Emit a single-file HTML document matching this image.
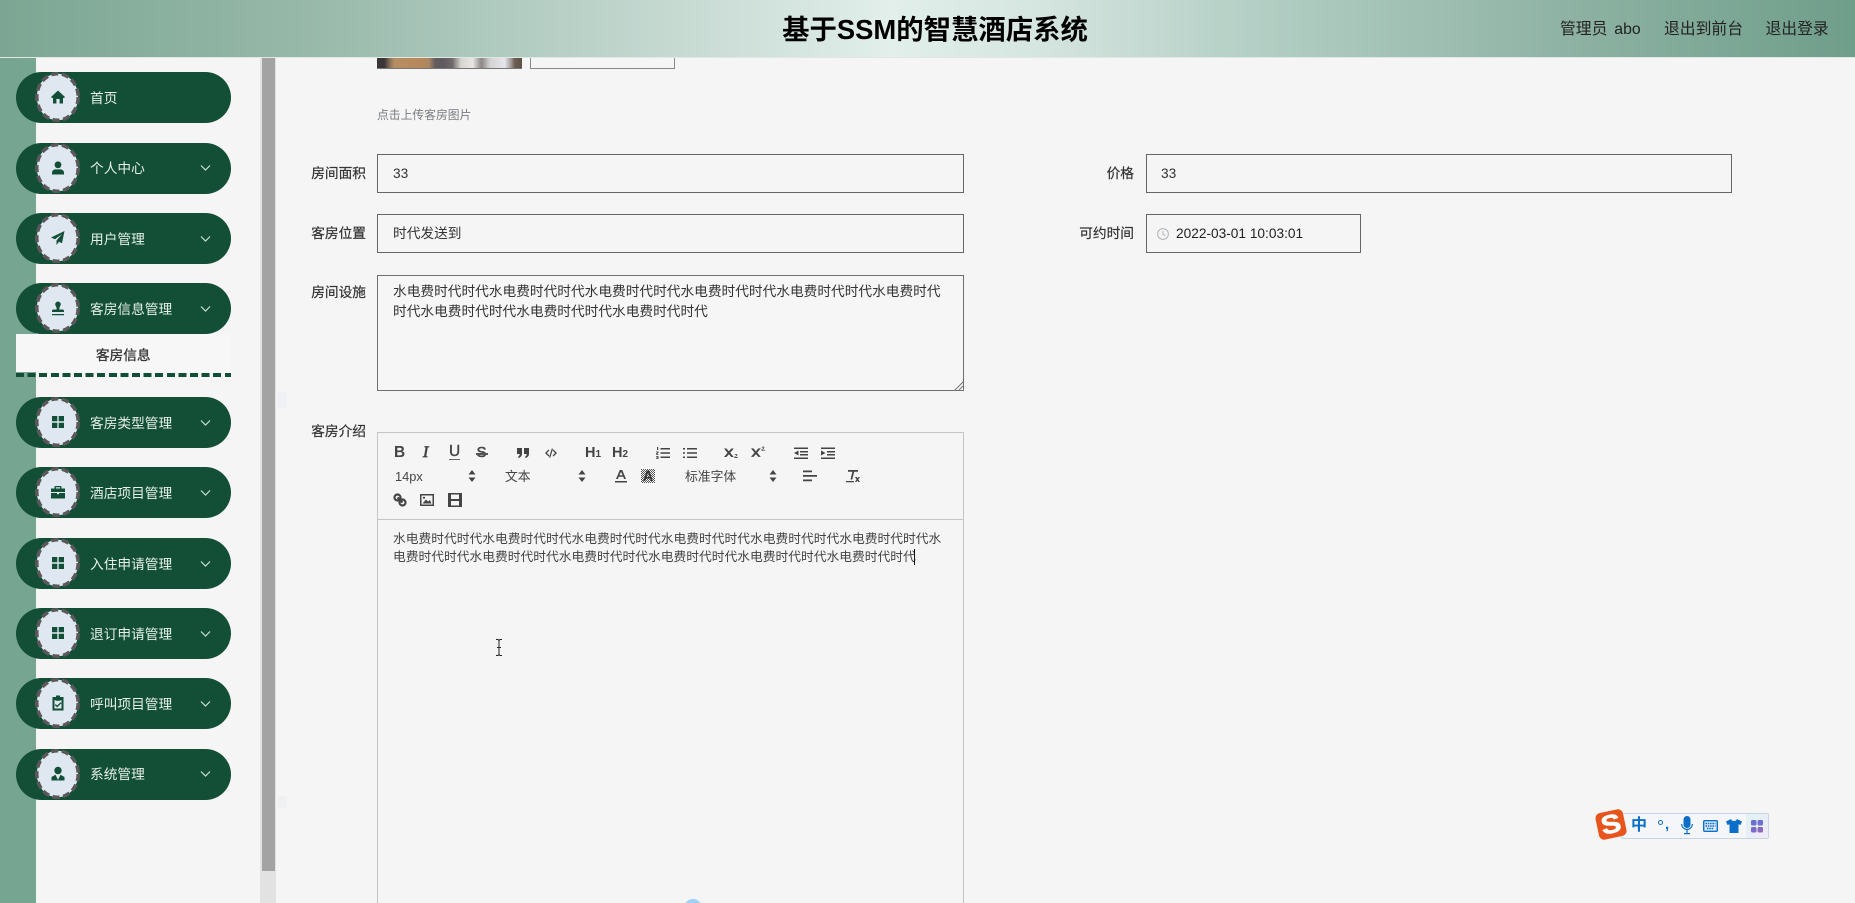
<!DOCTYPE html>
<html lang="zh">
<head>
<meta charset="utf-8">
<title>基于SSM的智慧酒店系统</title>
<style>
html,body{margin:0;padding:0;width:1855px;height:903px;overflow:hidden;background:#f5f5f5;font-family:"Liberation Sans","Noto Sans CJK SC",sans-serif;}
#root{position:relative;width:1855px;height:903px;overflow:hidden;background:#f5f5f5;}
.a{position:absolute;}
#hdr{left:0;top:0;width:1855px;height:57px;background:linear-gradient(90deg,#7ca693 0%,#96b8a9 16%,#d3e3dd 42%,#e2efeb 48%,#d5e5df 56%,#b5d0c6 67%,#8fb3a4 84%,#6f9e8b 100%);border-bottom:1px solid #dfe8e4;z-index:5;}
#title{left:700px;width:470px;top:12px;text-align:center;font-size:27.4px;line-height:36px;font-weight:bold;color:#000;}
.top{top:20px;font-size:15.8px;line-height:20px;color:#222;white-space:nowrap;}
#band{left:0;top:57px;width:36px;height:846px;background:#76a591;}
#side{left:36px;top:57px;width:224px;height:846px;background:#f5f5f6;}
#track{left:260px;top:57px;width:16px;height:846px;background:#e2e2e2;}
#thumb{left:262px;top:57px;width:13px;height:814px;background:#a3a3a3;}
.pill{position:absolute;left:15.5px;width:215.5px;height:51px;border-radius:26px;background:#124f36;}
.circ{position:absolute;left:19.5px;top:0;width:45px;height:50px;}
.pill svg.ic{position:absolute;left:33.5px;top:16px;width:18px;height:18px;fill:#124f36;}
.pill span{position:absolute;left:74.5px;top:16.5px;font-size:13.7px;line-height:20px;color:#e6efe9;white-space:nowrap;}
.pill svg.ch{position:absolute;left:184px;top:21.5px;width:11px;height:8px;fill:none;stroke:#cfe0d7;stroke-width:1.2;}
#sub{left:15.5px;top:334px;width:215.5px;height:38px;background:#f7f7f7;text-align:center;font-size:13.7px;line-height:43px;color:#333;-webkit-text-stroke:.3px #333;}
#dash{left:15.5px;top:373px;width:215.5px;height:4px;background:repeating-linear-gradient(90deg,#124f36 0 8px,transparent 8px 11.6px);}
.lbl{font-size:13.7px;line-height:20px;color:#333;white-space:nowrap;text-align:right;width:80px;-webkit-text-stroke:.2px #333;}
.inp{box-sizing:border-box;border:1px solid #666;background:#f5f5f5;font-size:13.7px;color:#333;line-height:37px;padding-left:15px;height:39px;white-space:nowrap;}
#photo{left:377px;top:57px;width:145px;height:12px;border-bottom:1px solid #777;box-sizing:border-box;background:linear-gradient(90deg,#3a3536 0,#3a3536 5%,#8a7158 9%,#b68e63 12%,#b8885a 30%,#a88662 36%,#625c60 40%,#5f5a5e 46%,#6f6a6c 52%,#d8d4d0 58%,#e8e6e4 66%,#8c8686 72%,#d4d2d2 78%,#e6e6ec 88%,#a8a2a0 92%,#6e5d50 95%,#5e5146 100%);}
#upl{left:530px;top:57px;width:145px;height:12px;box-sizing:border-box;border:1px solid #888;border-top:0;}
#hint{left:377px;top:106px;font-size:11.8px;line-height:18px;color:#777c80;white-space:nowrap;}
#ta{left:377px;top:275px;width:587px;height:116px;box-sizing:border-box;border:1px solid #6e6e6e;background:#f6f6f6;padding:6px 15px;font-size:13.7px;line-height:20px;color:#333;}
#ed{left:377px;top:432px;width:587px;height:471px;box-sizing:border-box;border:1px solid #c4c4c4;border-bottom:0;}
#edbar{left:378px;top:519px;width:585px;height:1px;background:#c4c4c4;}
.line{left:393px;font-size:12.75px;line-height:18px;color:#444;white-space:nowrap;}
.tb{font-size:12.8px;line-height:16px;color:#444;white-space:nowrap;}
svg.t{position:absolute;width:14px;height:14px;fill:#444;stroke:none;}
svg.s{position:absolute;width:8px;height:12px;fill:#444;}
</style>
</head>
<body>
<div id="root">
<div class="a" id="hdr"></div>
<div class="a" id="title" style="z-index:6">基于SSM的智慧酒店系统</div>
<div class="a top" style="left:1560px;z-index:6;word-spacing:2.5px">管理员 abo</div>
<div class="a top" style="left:1664px;z-index:6">退出到前台</div>
<div class="a top" style="left:1765.5px;z-index:6">退出登录</div>

<div class="a" id="band"></div>
<div class="a" id="side"></div>
<div class="a" id="track"></div>
<div class="a" id="thumb"></div>

<div class="pill" style="top:72px"><svg class="circ" viewBox="0 0 45 50"><ellipse cx="22.500" cy="25" rx="20.700" ry="23.300" fill="#dfe8f0" stroke="#5c585a" stroke-width="3.500" stroke-dasharray="7.200 3.600"/></svg><svg class="ic" viewBox="0 0 18 18"><path d="M9 2.500 2 9l1.200 1.200L4 9.600V15.500h3.400V11h3.200v4.500H14V9.600l.8.6L16 9z"/></svg><span>首页</span></div>
<div class="pill" style="top:142.500px"><svg class="circ" viewBox="0 0 45 50"><ellipse cx="22.500" cy="25" rx="20.700" ry="23.300" fill="#dfe8f0" stroke="#5c585a" stroke-width="3.500" stroke-dasharray="7.200 3.600"/></svg><svg class="ic" viewBox="0 0 18 18"><circle cx="9" cy="5.800" r="3.400"/><path d="M3 14c0-2.400 1.800-3.600 3.600-3.600h4.800c1.800 0 3.600 1.200 3.600 3.600v1.500H3z"/></svg><span>个人中心</span><svg class="ch" viewBox="0 0 11 8"><path d="M1 1.500l4.500 4.500L10 1.500"/></svg></div>
<div class="pill" style="top:213px"><svg class="circ" viewBox="0 0 45 50"><ellipse cx="22.500" cy="25" rx="20.700" ry="23.300" fill="#dfe8f0" stroke="#5c585a" stroke-width="3.500" stroke-dasharray="7.200 3.600"/></svg><svg class="ic" viewBox="0 0 18 18"><path d="M15.500 2 2 8.500l4 1.800L13 5l-5.500 6.500v4.500l2.500-3.200 3 1.500z"/></svg><span>用户管理</span><svg class="ch" viewBox="0 0 11 8"><path d="M1 1.500l4.500 4.500L10 1.500"/></svg></div>
<div class="pill" style="top:283px"><svg class="circ" viewBox="0 0 45 50"><ellipse cx="22.500" cy="25" rx="20.700" ry="23.300" fill="#dfe8f0" stroke="#5c585a" stroke-width="3.500" stroke-dasharray="7.200 3.600"/></svg><svg class="ic" viewBox="0 0 18 18"><path d="M9 2.500a2.800 2.800 0 0 0-2.800 2.800c0 1.500 1.200 2.400 1.400 3.700v1.500H4.500c-1 0-1.500.6-1.500 1.500v1h12v-1c0-.9-.5-1.500-1.500-1.500h-3.100V9c.2-1.300 1.400-2.200 1.400-3.700A2.800 2.800 0 0 0 9 2.500zM3 15h12v1.200H3z"/></svg><span>客房信息管理</span><svg class="ch" viewBox="0 0 11 8"><path d="M1 1.500l4.500 4.500L10 1.500"/></svg></div>
<div class="a" id="sub">客房信息</div>
<div class="a" id="dash"></div>
<div class="pill" style="top:397px"><svg class="circ" viewBox="0 0 45 50"><ellipse cx="22.500" cy="25" rx="20.700" ry="23.300" fill="#dfe8f0" stroke="#5c585a" stroke-width="3.500" stroke-dasharray="7.200 3.600"/></svg><svg class="ic" viewBox="0 0 18 18"><path d="M3 3h5.300v5.300H3zM9.700 3H15v5.300H9.700zM3 9.700h5.300V15H3zM9.700 9.700H15V15H9.700z"/></svg><span>客房类型管理</span><svg class="ch" viewBox="0 0 11 8"><path d="M1 1.500l4.500 4.500L10 1.500"/></svg></div>
<div class="pill" style="top:467px"><svg class="circ" viewBox="0 0 45 50"><ellipse cx="22.500" cy="25" rx="20.700" ry="23.300" fill="#dfe8f0" stroke="#5c585a" stroke-width="3.500" stroke-dasharray="7.200 3.600"/></svg><svg class="ic" viewBox="0 0 18 18"><path d="M6.500 3h5c.6 0 1 .4 1 1v1.500H16V9H2V5.500h3.500V4c0-.6.4-1 1-1zm.4 1.300v1.200h4.200V4.300zM2 10h6v1.200h2V10h6v5.500H2z"/></svg><span>酒店项目管理</span><svg class="ch" viewBox="0 0 11 8"><path d="M1 1.500l4.500 4.500L10 1.500"/></svg></div>
<div class="pill" style="top:538px"><svg class="circ" viewBox="0 0 45 50"><ellipse cx="22.500" cy="25" rx="20.700" ry="23.300" fill="#dfe8f0" stroke="#5c585a" stroke-width="3.500" stroke-dasharray="7.200 3.600"/></svg><svg class="ic" viewBox="0 0 18 18"><path d="M3 3h5.300v5.300H3zM9.700 3H15v5.300H9.700zM3 9.700h5.300V15H3zM9.700 9.700H15V15H9.700z"/></svg><span>入住申请管理</span><svg class="ch" viewBox="0 0 11 8"><path d="M1 1.500l4.500 4.500L10 1.500"/></svg></div>
<div class="pill" style="top:608px"><svg class="circ" viewBox="0 0 45 50"><ellipse cx="22.500" cy="25" rx="20.700" ry="23.300" fill="#dfe8f0" stroke="#5c585a" stroke-width="3.500" stroke-dasharray="7.200 3.600"/></svg><svg class="ic" viewBox="0 0 18 18"><path d="M3 3h5.300v5.300H3zM9.700 3H15v5.300H9.700zM3 9.700h5.300V15H3zM9.700 9.700H15V15H9.700z"/></svg><span>退订申请管理</span><svg class="ch" viewBox="0 0 11 8"><path d="M1 1.500l4.500 4.500L10 1.500"/></svg></div>
<div class="pill" style="top:678px"><svg class="circ" viewBox="0 0 45 50"><ellipse cx="22.500" cy="25" rx="20.700" ry="23.300" fill="#dfe8f0" stroke="#5c585a" stroke-width="3.500" stroke-dasharray="7.200 3.600"/></svg><svg class="ic" viewBox="0 0 18 18"><path d="M7 1.500h4V3h3.500v13.500h-11V3H7zM5.500 6v8.500h7V6h-1v.7h-5V6zm6 2.200 1 .9-4.300 4.300-2.400-2.300.9-1 1.500 1.400z" fill-rule="evenodd"/></svg><span>呼叫项目管理</span><svg class="ch" viewBox="0 0 11 8"><path d="M1 1.500l4.500 4.500L10 1.500"/></svg></div>
<div class="pill" style="top:748.500px"><svg class="circ" viewBox="0 0 45 50"><ellipse cx="22.500" cy="25" rx="20.700" ry="23.300" fill="#dfe8f0" stroke="#5c585a" stroke-width="3.500" stroke-dasharray="7.200 3.600"/></svg><svg class="ic" viewBox="0 0 18 18"><circle cx="9" cy="5.500" r="3.700"/><path d="M6.500 9.800 2.500 12v3.500h13V12l-4-2.200L9 15z"/></svg><span>系统管理</span><svg class="ch" viewBox="0 0 11 8"><path d="M1 1.500l4.500 4.500L10 1.500"/></svg></div>

<div class="a" style="left:278px;top:392px;width:9px;height:16px;background:#eff0f3"></div>
<div class="a" style="left:278px;top:796px;width:9px;height:12px;background:#eff0f2"></div>

<div class="a" id="photo"></div>
<div class="a" id="upl"></div>
<div class="a" id="hint">点击上传客房图片</div>

<div class="a lbl" style="left:286px;top:164px">房间面积</div>
<div class="a inp" style="left:377px;top:153.500px;width:587px">33</div>
<div class="a lbl" style="left:1054px;top:164px">价格</div>
<div class="a inp" style="left:1146px;top:153.500px;width:586px;padding-left:14px">33</div>
<div class="a lbl" style="left:286px;top:224px">客房位置</div>
<div class="a inp" style="left:377px;top:214px;width:587px">时代发送到</div>
<div class="a lbl" style="left:1054px;top:224px">可约时间</div>
<div class="a inp" style="left:1146px;top:214px;width:215px;padding-left:29px;color:#222">2022-03-01 10:03:01</div>
<svg class="a" style="left:1155.500px;top:227px" width="14" height="14" viewBox="0 0 13 13" fill="none" stroke="#b4b8bd" stroke-width="1"><circle cx="6.500" cy="6.500" r="5"/><path d="M6.500 3.500v3.300l2.200 1.200"/></svg>

<div class="a lbl" style="left:286px;top:283px">房间设施</div>
<div class="a" id="ta">水电费时代时代水电费时代时代水电费时代时代水电费时代时代水电费时代时代水电费时代<br>时代水电费时代时代水电费时代时代水电费时代时代</div>
<svg class="a" style="left:954px;top:381px" width="9" height="9" viewBox="0 0 9 9" stroke="#777" stroke-width="1"><path d="M1 9 9 1M5 9l4-4"/></svg>

<div class="a lbl" style="left:286px;top:422px">客房介绍</div>
<div class="a" id="ed"></div>
<div class="a" id="edbar"></div>

<!-- toolbar row 1 -->
<div class="a" style="left:394px;top:445px;font:bold 15.500px/16px 'Liberation Sans',sans-serif;color:#444">B</div>
<div class="a" style="left:423px;top:445px;font:italic 16px/16px 'Liberation Serif',serif;color:#444;-webkit-text-stroke:.7px #444">I</div>
<div class="a" style="left:449px;top:444px;font:15.500px/15px 'Liberation Sans',sans-serif;color:#444;border-bottom:1.500px solid #666;height:15px;-webkit-text-stroke:.4px #444">U</div>
<div class="a" style="left:476.500px;top:445px;font:15px/16px 'Liberation Sans',sans-serif;color:#444;-webkit-text-stroke:.5px #444">S</div>
<div class="a" style="left:476px;top:453px;width:12px;height:1.500px;background:#555"></div>
<svg class="t" style="left:516px;top:446px" viewBox="0 0 14 14"><path d="M1 2h5v5.500C6 10 4.500 11.500 2.500 12l-.5-1.300C3 10.300 3.600 9.500 3.700 8H1zM8 2h5v5.500c0 2.500-1.500 4-3.500 4.500L9 10.700c1-.4 1.600-1.200 1.700-2.700H8z"/></svg>
<svg class="t" style="left:544px;top:446px" viewBox="0 0 14 14"><path d="M4.500 3.500 1 7l3.500 3.500.9-.9L2.900 7l2.500-2.600zM9.500 3.500l-.9.900L11.100 7 8.600 9.600l.9.900L13 7zM7.800 2.500 5 11.500l1.200.3 2.800-9z"/></svg>
<div class="a" style="left:585px;top:445px;font:bold 14.500px/16px 'Liberation Sans',sans-serif;color:#444;white-space:nowrap">H<span style="font-size:10px">1</span></div>
<div class="a" style="left:612px;top:445px;font:bold 14.500px/16px 'Liberation Sans',sans-serif;color:#444;white-space:nowrap">H<span style="font-size:10px">2</span></div>
<svg class="t" style="left:656px;top:446px" viewBox="0 0 14 14"><path d="M4.500 2H14v1.500H4.500zM4.500 6.200H14v1.500H4.500zM4.500 10.500H14V12H4.500zM1 1h1.200v3H1zM0 5.500h2.500v1.200L1.200 8h1.300v.7H0V7.800L1.400 6.300H0zM0 10h2.500v3H0v-.7h1.500v-.5H.5v-.5h1v-.6H0z"/></svg>
<svg class="t" style="left:683px;top:446px" viewBox="0 0 14 14"><path d="M4 2h10v1.500H4zM4 6.200h10v1.500H4zM4 10.500h10V12H4zM0 2h2v1.500H0zM0 6.200h2v1.500H0zM0 10.500h2V12H0z"/></svg>
<svg class="t" style="left:724px;top:446px;width:16px;height:13px" viewBox="0 0 18 14"><path d="M0 2.500h2.800L5.500 5.800 8.200 2.500H11L7 7.300 11 12H8.200L5.500 8.900 2.800 12H0l4-4.700zM12 12.200h3.500v1h-4v-1l2.200-1.600c.5-.5.5-1-.2-1-.4 0-.8.200-1.200.4l-.4-.7c.4-.4 1-.6 1.700-.6 1.400 0 1.900 1.300.9 2.200z"/></svg>
<svg class="t" style="left:751px;top:445px;width:16px;height:13px" viewBox="0 0 18 14"><path d="M0 3.500h2.800L5.500 6.800 8.200 3.500H11L7 8.300 11 13H8.200L5.500 9.900 2.800 13H0l4-4.700zM12 5h3.500v1h-4V5l2.200-1.600c.5-.5.5-1-.2-1-.4 0-.8.200-1.200.4l-.4-.7c.4-.4 1-.6 1.700-.6 1.400 0 1.900 1.300.9 2.200z"/></svg>
<svg class="t" style="left:794px;top:446px" viewBox="0 0 14 14"><path d="M0 1.500h14V3H0zM6 5h8v1.500H6zM6 8h8v1.500H6zM0 11.500h14V13H0zM4.500 4.500v5L0 7z"/></svg>
<svg class="t" style="left:821px;top:446px" viewBox="0 0 14 14"><path d="M0 1.500h14V3H0zM6 5h8v1.500H6zM6 8h8v1.500H6zM0 11.500h14V13H0zM0 4.500v5L4.500 7z"/></svg>

<!-- toolbar row 2 -->
<div class="a tb" style="left:395px;top:469px">14px</div>
<svg class="s" style="left:468px;top:470px" viewBox="0 0 8 12"><path d="M4 0 7.500 4.500h-7zM4 12 .5 7.500h7z"/></svg>
<div class="a tb" style="left:505px;top:469px">文本</div>
<svg class="s" style="left:578px;top:470px" viewBox="0 0 8 12"><path d="M4 0 7.500 4.500h-7zM4 12 .5 7.500h7z"/></svg>
<svg class="t" style="left:614px;top:469px" viewBox="0 0 14 14"><path d="M5.800 1h2.400L12 10h-1.900l-.9-2.300H4.800L3.900 10H2zM5.400 6.200h3.200L7 2.700zM1 12h12v1.500H1z"/></svg>
<svg class="t" style="left:641px;top:469px" viewBox="0 0 14 14"><defs><pattern id="hatch" width="2" height="2" patternUnits="userSpaceOnUse"><rect width="1" height="1" fill="#555"/><rect x="1" y="1" width="1" height="1" fill="#555"/></pattern></defs><rect width="14" height="14" fill="url(#hatch)"/><path d="M5.800 1.500h2.400l3.600 10.500H10l-.9-2.500H4.900L4 12H2.200zM5.400 8h3.200L7 3.500z" fill="#333"/></svg>
<div class="a tb" style="left:685px;top:469px">标准字体</div>
<svg class="s" style="left:769px;top:470px" viewBox="0 0 8 12"><path d="M4 0 7.500 4.500h-7zM4 12 .5 7.500h7z"/></svg>
<svg class="t" style="left:803px;top:469px" viewBox="0 0 14 14"><path d="M0 1.500h9V3.300H0zM0 6h14v1.800H0zM0 10.500h9v1.800H0z"/></svg>
<svg class="t" style="left:846px;top:469px" viewBox="0 0 14 14"><path d="M2 1h10v1.800H8.200L6.300 10.500H4.500L6.400 2.800H2zM0 12h8v1.200H0zM9 8h1.800l.9 1.300L12.600 8H14l-1.700 2.500L14 13h-1.600l-1-1.400-1 1.400H8.900l1.700-2.500z"/></svg>

<!-- toolbar row 3 -->
<svg class="t" style="left:393px;top:493px" viewBox="0 0 14 14" fill="none"><g fill="none" stroke="#444" stroke-width="2.200"><circle cx="4.500" cy="4.500" r="3"/><circle cx="9.500" cy="9.500" r="3"/><path d="M4.500 4.500 9.500 9.500"/></g></svg>
<svg class="t" style="left:420px;top:493px" viewBox="0 0 14 14"><path d="M0 1h14v12H0zm1.500 1.500v9h11v-9z" fill-rule="evenodd"/><path d="M2.500 10.500 6 6.500l2 2L10 7l1.500 3.500z"/><circle cx="4" cy="4.700" r="1.100"/></svg>
<svg class="t" style="left:448px;top:493px" viewBox="0 0 14 14"><path d="M0 0h14v14H0zm3 1.500v4.500h8V1.500zm0 6.500v4.500h8V8z" fill-rule="evenodd"/></svg>

<div class="a line" style="top:530px">水电费时代时代水电费时代时代水电费时代时代水电费时代时代水电费时代时代水电费时代时代水</div>
<div class="a line" style="top:548px">电费时代时代水电费时代时代水电费时代时代水电费时代时代水电费时代时代水电费时代时代</div>
<div class="a" style="left:914px;top:549px;width:1px;height:16px;background:#111"></div>

<!-- I-beam cursor -->
<svg class="a" style="left:494px;top:639px" width="10" height="17" viewBox="0 0 10 17" fill="none" stroke="#222" stroke-width="1"><path d="M2 .5h2l1 1 1-1h2M5 1.500v14M2 16.500h2l1-1 1 1h2M3 8.500h4"/></svg>

<!-- blue dot -->
<div class="a" style="left:684px;top:899px;width:18px;height:18px;border-radius:50%;background:#9dd3f6"></div>

<!-- sogou bar -->
<div class="a" style="left:1621px;top:813px;width:148px;height:26px;box-sizing:border-box;border:1px solid #c8d4e6;border-radius:2px;background:#f4f6fa"></div>
<div class="a" style="left:1746px;top:814px;width:22px;height:24px;background:linear-gradient(135deg,#dff3f4,#f2e9f8)"></div>
<div class="a" style="left:1597px;top:810.500px;width:28px;height:27px;border-radius:5px;background:#e8551c;transform:rotate(-12deg)"></div>
<div class="a" style="left:1597px;top:810.500px;width:28px;height:27px;transform:rotate(-12deg) scaleX(1.150);color:#fff;font:bold 26px/27px 'Liberation Sans',sans-serif;text-align:center;-webkit-text-stroke:.6px #fff">S</div>
<div class="a" style="left:1631px;top:816px;font:bold 16px/20px 'Liberation Sans','Noto Sans CJK SC',sans-serif;color:#0b6fc9">中</div>
<div class="a" style="left:1658px;top:820px;width:5px;height:5px;box-sizing:border-box;border:1.500px solid #0b6fc9;border-radius:50%"></div>
<div class="a" style="left:1665px;top:815px;font:bold 15px/20px 'Liberation Sans',sans-serif;color:#0b6fc9">,</div>
<svg class="a" style="left:1680px;top:816px" width="14" height="20" viewBox="0 0 14 20" fill="#0b6fc9"><rect x="3.500" y="0" width="7" height="12" rx="3.500"/><path d="M1 8h1.200a4.800 4.800 0 0 0 9.600 0H13a6 6 0 0 1-5.400 6v3H10v1.300H4V17h2.400v-3A6 6 0 0 1 1 8z"/></svg>
<svg class="a" style="left:1703px;top:820px" width="15" height="12" viewBox="0 0 15 12"><rect x=".7" y=".7" width="13.600" height="10.600" rx="1" fill="#dcebf8" stroke="#0b6fc9" stroke-width="1.400"/><path d="M2.500 3.500h10M2.500 6h10M4 8.500h7" stroke="#0b6fc9" stroke-width="1.500" stroke-dasharray="1.500 .8"/></svg>
<svg class="a" style="left:1726px;top:819px" width="16" height="14" viewBox="0 0 16 14" fill="#0b6fc9"><path d="M5 0 0 2.500 1.500 6 3.500 5.200V14h9V5.200l2 .8L16 2.500 11 0c-.5 1.500-1.500 2-3 2S5.500 1.500 5 0z"/></svg>
<svg class="a" style="left:1750px;top:820px" width="14" height="14" viewBox="0 0 14 14"><rect x="1" y="0" width="5.500" height="5.500" rx="1.500" fill="#6a6fd0"/><rect x="7.500" y="0" width="5.500" height="5.500" rx="1.500" fill="#6a6fd0"/><rect x="1" y="7" width="5.500" height="5.500" rx="1.500" fill="#7a6ac8"/><rect x="7.500" y="7" width="5.500" height="5.500" rx="1.500" fill="#8a68c0"/></svg>
</div>
</body>
</html>
